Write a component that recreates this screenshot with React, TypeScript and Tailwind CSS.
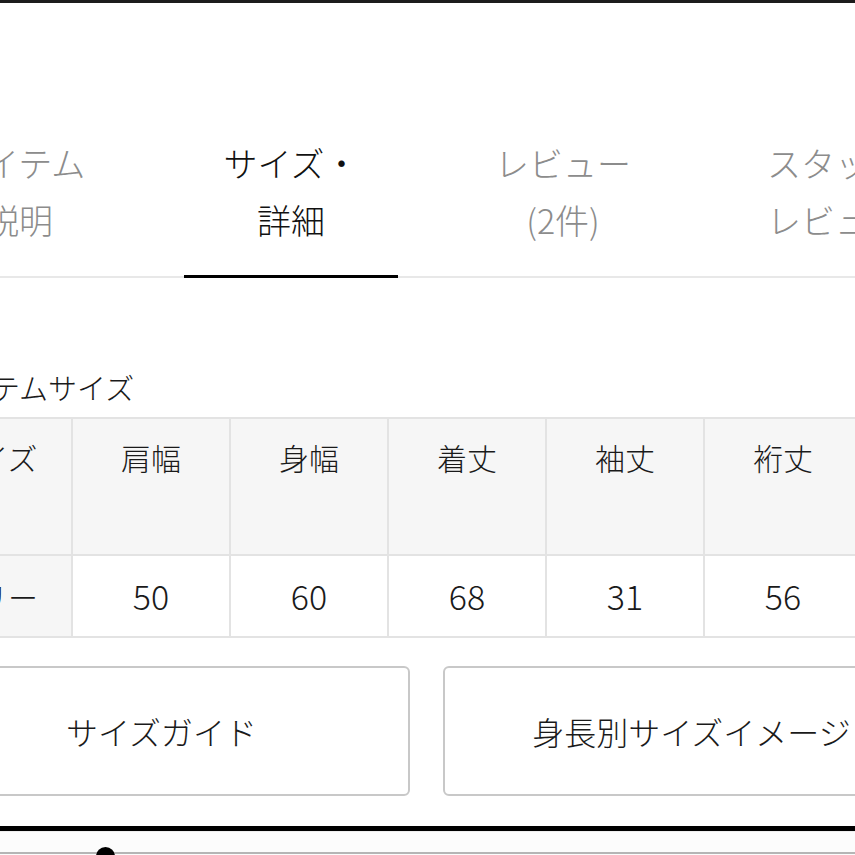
import React from "react";

const TABS = [
  { l1: "アイテム", l2: "説明", active: false },
  { l1: "サイズ・", l2: "詳細", active: true },
  { l1: "レビュー", l2: "(2件)", active: false },
  { l1: "スタッフ", l2: "レビュー", active: false },
];

const HEAD = ["サイズ", "肩幅", "身幅", "着丈", "袖丈", "裄丈"];
const ROW = ["フリー", "50", "60", "68", "31", "56"];

const font = { fontFamily: '"Noto Sans CJK JP", "Noto Sans", sans-serif' };

export default function App() {
  return (
    <div
      className="relative h-[855px] w-[855px] overflow-hidden bg-white font-light text-[#1a1a1a]"
      style={font}
    >
      {/* top edge */}
      <div className="h-[3px] w-full bg-[#1c1c1c]" />

      {/* Tabs */}
      <div className="mt-[131px] border-b-2 border-[#e8e8e8]">
        <div className="ml-[-117px] flex">
          {TABS.map((t) => (
            <div key={t.l1} className="flex w-[272px] shrink-0 flex-col">
              <div
                className={
                  "flex flex-col items-center pb-[27px] text-[34px] leading-[57px] " +
                  (t.active ? "text-[#111]" : "text-[#8c8c8c]")
                }
              >
                <span className="whitespace-nowrap">{t.l1}</span>
                <span className="whitespace-nowrap">{t.l2}</span>
              </div>
              <div
                className={
                  "relative mx-[29px] -mb-[2px] h-[3px] " +
                  (t.active ? "bg-black" : "bg-transparent")
                }
              />
            </div>
          ))}
        </div>
      </div>

      {/* Size section */}
      <div className="ml-[-87px] w-[1100px]">
        <h2 className="ml-[22px] mt-[89px] whitespace-nowrap text-[29px] font-light leading-[40px]">
          アイテムサイズ
        </h2>

        <table className="mt-[10px] border-collapse">
          <tbody>
            <tr className="h-[137px]">
              {HEAD.map((h) => (
                <td
                  key={h}
                  className="w-[158px] min-w-[158px] border-2 border-[#e3e3e3] bg-[#f6f6f6] pt-[18px] text-center align-top text-[30px] leading-[40px]"
                >
                  {h}
                </td>
              ))}
            </tr>
            <tr className="h-[82px]">
              {ROW.map((v, i) => (
                <td
                  key={i}
                  className={
                    "w-[158px] border-2 border-[#e3e3e3] text-center align-middle leading-[40px] " +
                    (i === 0 ? "bg-[#f6f6f6] text-[30px]" : "bg-white text-[34px]")
                  }
                >
                  {v}
                </td>
              ))}
            </tr>
          </tbody>
        </table>

        <div className="mt-[28px] flex gap-[33px]">
          <button
            type="button"
            className="flex h-[130px] w-[497px] items-center justify-center rounded-[6px] border-2 border-[#c8c8c8] bg-white text-[32px] text-[#1a1a1a]"
          >
            サイズガイド
          </button>
          <button
            type="button"
            className="flex h-[130px] w-[497px] items-center justify-center whitespace-nowrap rounded-[6px] border-2 border-[#c8c8c8] bg-white text-[32px] text-[#1a1a1a]"
          >
            身長別サイズイメージ
          </button>
        </div>
      </div>

      {/* bottom bar + slider */}
      <div className="mt-[30px] h-[5px] w-full bg-black" />
      <div className="relative h-[30px] w-full border-t border-[#eeeeee] bg-[#fcfcfc]">
        <div className="mt-[20px] h-[2px] w-full bg-[#b5b5b5]" />
        <span className="absolute left-[96px] top-[15px] h-[19px] w-[19px] rounded-full bg-black" />
      </div>
    </div>
  );
}
